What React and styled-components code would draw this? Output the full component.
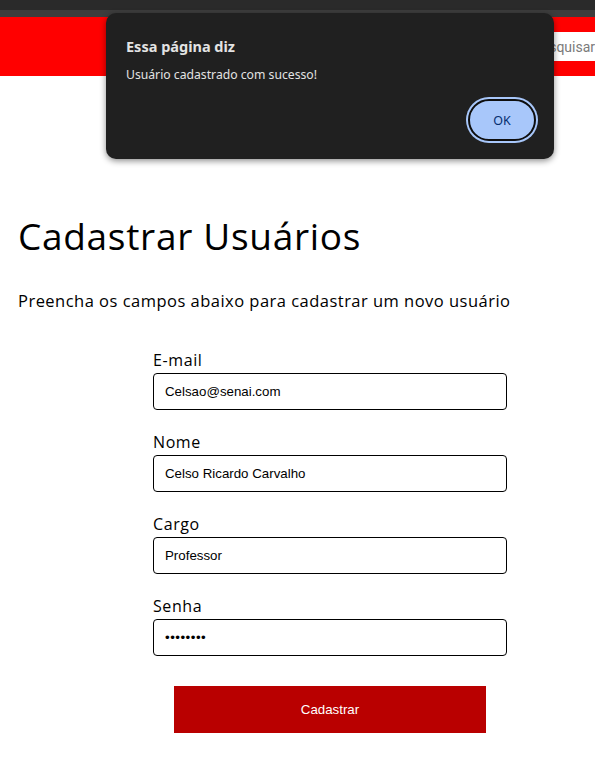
import React from 'react';
import styled, { createGlobalStyle } from 'styled-components';

const GlobalStyle = createGlobalStyle`
  html, body {
    margin: 0;
    padding: 0;
    background: #ffffff;
    width: 595px;
    height: 767px;
    overflow: hidden;
  }
  * { box-sizing: border-box; }
`;

const Page = styled.div`
  position: relative;
  width: 595px;
  height: 767px;
  overflow: hidden;
  font-family: "Open Sans", "Noto Sans", sans-serif;
  color: #000;
`;

const Chrome = styled.div`
  height: 10px;
  background: #2a2a2a;
`;

const ChromeEdge = styled.div`
  height: 7px;
  background: #3d3d3d;
`;

const Header = styled.header`
  height: 59px;
  background: #ff0000;
  display: flex;
  align-items: center;
  overflow: hidden;
  padding-left: 528px;
`;

const Search = styled.input`
  flex: 0 0 200px;
  width: 200px;
  height: 29px;
  border: none;
  outline: none;
  padding: 0 0 0 5px;
  font-family: "Roboto", "Liberation Sans", sans-serif;
  font-size: 14px;
  color: #777;
  &::placeholder { color: #7a7a7a; }
`;

const Main = styled.main`
  padding: 136px 18px 0;
`;

const Title = styled.h1`
  margin: 0;
  font-weight: 400;
  font-size: 37px;
  line-height: 48px;
  letter-spacing: 0.7px;
`;

const Lead = styled.p`
  margin: 29px 0 0;
  font-size: 16.5px;
  line-height: 24px;
  letter-spacing: 0.48px;
`;

const Form = styled.form`
  margin: 36px 0 0 135px;
  width: 354px;
  display: flex;
  flex-direction: column;
  gap: 21px;
`;

const Field = styled.label`
  display: flex;
  flex-direction: column;
  gap: 2px;
`;

const LabelText = styled.span`
  font-size: 16px;
  line-height: 22px;
  letter-spacing: 0.6px;
`;

const Input = styled.input`
  height: 37px;
  border: 1px solid #000;
  border-radius: 4px;
  padding: 0 11px;
  font-family: "Liberation Sans", Arial, sans-serif;
  font-size: 13.3px;
  color: #000;
  outline: none;
  background: #fff;
  letter-spacing: ${p => (p.type === 'password' ? '0.5px' : 'normal')};
`;

const Submit = styled.button`
  align-self: center;
  margin-top: 9px;
  width: 312px;
  height: 47px;
  border: none;
  background: #b90000;
  color: #fff;
  font-family: "Liberation Sans", Arial, sans-serif;
  font-size: 13.3px;
`;

const Dialog = styled.div`
  position: absolute;
  left: 106px;
  top: 13px;
  width: 448px;
  height: 146px;
  background: #202020;
  border-radius: 10px;
  box-shadow: 0 2px 6px rgba(0, 0, 0, 0.45);
  padding: 24px 20px 18px;
  display: flex;
  flex-direction: column;
  font-family: "Noto Sans", "Open Sans", sans-serif;
  color: #e3e3e3;
`;

const DialogTitle = styled.div`
  font-size: 14.5px;
  font-weight: 700;
  line-height: 18px;
`;

const DialogText = styled.div`
  margin-top: 12px;
  font-size: 12.2px;
  line-height: 16px;
`;

const DialogActions = styled.div`
  margin-top: auto;
  display: flex;
  justify-content: flex-end;
`;

const OkButton = styled.button`
  width: 68px;
  height: 42px;
  border-radius: 21px;
  background: #a8c7fa;
  color: #062e6f;
  border: 2px solid #0e0e0e;
  box-shadow: 0 0 0 2px #a8c7fa;
  font-family: "Noto Sans", "Open Sans", sans-serif;
  font-size: 12.5px;
  margin-right: -2px;
`;

const fields = [
  { label: 'E-mail', type: 'email', value: 'Celsao@senai.com' },
  { label: 'Nome', type: 'text', value: 'Celso Ricardo Carvalho' },
  { label: 'Cargo', type: 'text', value: 'Professor' },
  { label: 'Senha', type: 'password', value: 'senha123' },
];

export default function App() {
  return (
    <Page>
      <GlobalStyle />
      <Chrome />
      <ChromeEdge />
      <Header>
        <Search placeholder="Pesquisar" readOnly />
      </Header>
      <Main>
        <Title>Cadastrar Usuários</Title>
        <Lead>Preencha os campos abaixo para cadastrar um novo usuário</Lead>
        <Form onSubmit={e => e.preventDefault()}>
          {fields.map(f => (
            <Field key={f.label}>
              <LabelText>{f.label}</LabelText>
              <Input type={f.type} defaultValue={f.value} />
            </Field>
          ))}
          <Submit type="submit">Cadastrar</Submit>
        </Form>
      </Main>
      <Dialog>
        <DialogTitle>Essa página diz</DialogTitle>
        <DialogText>Usuário cadastrado com sucesso!</DialogText>
        <DialogActions>
          <OkButton type="button">OK</OkButton>
        </DialogActions>
      </Dialog>
    </Page>
  );
}
